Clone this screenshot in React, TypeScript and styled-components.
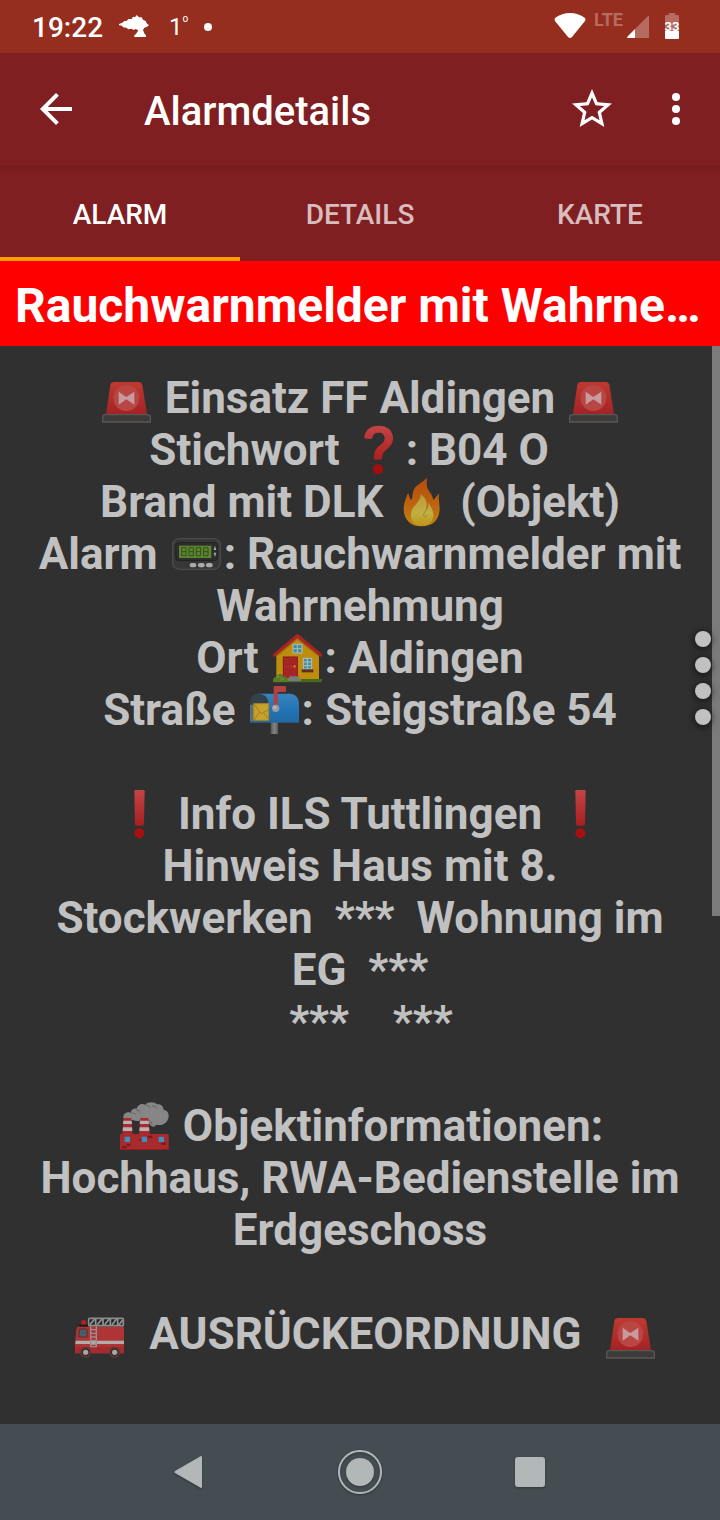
import styled, { createGlobalStyle } from "styled-components"

const Siren = () => (
    <Emoji viewBox="0 0 165 156" role="img" aria-label="Blaulicht">
        <defs>
            <linearGradient id="siren" x1="0" y1="0" x2="0" y2="1">
                <stop offset="0" stopColor="#BE3A30" />
                <stop offset="1" stopColor="#A32225" />
            </linearGradient>
        </defs>
        <path d="M21 127L34 38Q36 30 44 30H120Q128 30 130 38L144 127Z" fill="url(#siren)" />
        <circle cx="82" cy="78" r="39" fill="#B84643" />
        <path d="M59 59L82 75 106 59V98L82 82 59 98Z" fill="#C89A9E" />
        <path d="M11 150V136Q11 128 19 128H146Q154 128 154 136V150Z" fill="#3D3A3A" stroke="#575555" strokeWidth="4" />
    </Emoji>
)

const Question = () => (
    <Emoji viewBox="0 0 165 156" role="img" aria-label="Fragezeichen">
        <defs>
            <linearGradient id="question" x1="0" y1="0" x2="0" y2="1">
                <stop offset="0" stopColor="#C24444" />
                <stop offset="1" stopColor="#AE2020" />
            </linearGradient>
        </defs>
        <path d="M40 40C41 19 58 5 83 5C109 5 126 19 126 42C126 59 117 68 106 77C96 85 94 91 93 103Q93 107 88 107H73Q69 107 69 102C69 83 75 73 87 64C96 57 101 52 101 43C101 32 94 26 83 26C71 26 65 32 64 42Q63 45 59 45L44 44Q40 44 40 40Z" fill="url(#question)" />
        <circle cx="81" cy="136" r="15" fill="#A80D0E" />
    </Emoji>
)

const Exclamation = () => (
    <Emoji viewBox="0 0 165 156" role="img" aria-label="Ausrufezeichen">
        <defs>
            <linearGradient id="exclamation" x1="0" y1="0" x2="0" y2="1">
                <stop offset="0" stopColor="#C24545" />
                <stop offset="1" stopColor="#A91F20" />
            </linearGradient>
        </defs>
        <path d="M69 6H96Q98 6 98 9L96 109Q96 113 92 113H73Q69 113 69 109L67 9Q67 6 69 6Z" fill="url(#exclamation)" />
        <circle cx="82" cy="136" r="15" fill="#A70F10" />
    </Emoji>
)

const Fire = () => (
    <Emoji viewBox="0 0 165 156" role="img" aria-label="Feuer">
        <defs>
            <linearGradient id="fire" x1="0" y1="0" x2="0" y2="1">
                <stop offset="0" stopColor="#B84A0E" />
                <stop offset=".55" stopColor="#BC640F" />
                <stop offset="1" stopColor="#BF8414" />
            </linearGradient>
            <linearGradient id="flame" x1="0" y1="0" x2="0" y2="1">
                <stop offset="0" stopColor="#B99B35" />
                <stop offset=".6" stopColor="#C0B044" />
                <stop offset="1" stopColor="#BE9416" />
            </linearGradient>
        </defs>
        <path d="M98 5C100 20 94 32 107 48C114 57 116 63 118 72C123 68 128 60 136 52C132 68 137 82 137 97C137 132 116 151 83 151C49 151 29 130 29 98C29 80 37 65 42 51C46 60 47 67 51 72C57 66 54 57 58 45C64 25 84 23 98 5Z" fill="url(#fire)" />
        <path d="M81 55C100 71 99 84 98 101C105 97 102 87 104 80C108 90 118 101 118 117C118 137 104 149 84 149C63 149 51 137 51 119C51 99 58 96 66 85C73 76 80 67 81 55Z" fill="url(#flame)" />
        <path d="M97 90C101 100 91 107 89 116C88 123 96 124 100 117" fill="none" stroke="#AC8425" strokeWidth="3" />
    </Emoji>
)

const Pager = () => (
    <Emoji viewBox="0 0 165 156" role="img" aria-label="Pager">
        <rect x="11" y="32" width="143" height="92" rx="20" fill="#373737" stroke="#4B4B4B" strokeWidth="4" />
        <rect x="20" y="44" width="125" height="54" rx="9" fill="#2D2D2D" stroke="#222" strokeWidth="3" />
        <rect x="30" y="53" width="97" height="37" fill="#5C8530" />
        {[38, 60, 82, 104].map((x) => (
            <path key={x} d={`M${x} 59H${x + 13}V83H${x}ZM${x} 71H${x + 13}`} fill="none" stroke="#33501D" strokeWidth="3" />
        ))}
        <path d="M138 53L142 66H134ZM134 74H142L138 87Z" fill="#AAA" />
        <rect x="62" y="105" width="20" height="13" rx="6" fill="#AAA" />
        <rect x="87" y="105" width="20" height="13" rx="6" fill="#AAA" />
        <rect x="111" y="105" width="20" height="13" rx="6" fill="#AAA" />
    </Emoji>
)

const House = () => (
    <Emoji viewBox="0 0 165 156" role="img" aria-label="Haus">
        <path d="M19 66L82 13 147 66V142H19Z" fill="#BF8D0E" />
        <path d="M19 76L82 24 147 76V67L82 13 19 67Z" fill="#A27411" />
        <path d="M9 71Q8 67 12 64L78 8Q82 4 87 8L153 64Q157 67 156 71L152 75 82 18 13 75Z" fill="#AA2422" />
        <rect x="69" y="37" width="27" height="26" fill="#3B8FAE" stroke="#B9B9A6" strokeWidth="3" />
        <path d="M82 37V63M69 50H96" stroke="#B9B9A6" strokeWidth="3" />
        <rect x="40" y="75" width="42" height="61" fill="#AC2728" stroke="#7E1716" strokeWidth="3" />
        <path d="M47 83H58V97H47ZM64 83H75V97H64ZM47 112H58V126H47ZM64 112H75V126H64Z" fill="none" stroke="#94201F" strokeWidth="2" />
        <path d="M74 99L78 103 74 107 70 103Z" fill="#D3940A" />
        <rect x="100" y="79" width="25" height="32" fill="#3D91B0" stroke="#BDBDAB" strokeWidth="3" />
        <path d="M112 79V111M100 90H125M100 101H125" stroke="#BDBDAB" strokeWidth="3" />
        <rect x="95" y="112" width="35" height="9" fill="#5B2F25" />
        <path d="M9 141H156V151H9Z" fill="#42691D" />
        <path d="M57 133H87V140H93V148H51V140H57Z" fill="#7B7979" />
        <path d="M9 149C9 137 14 135 20 135C22 123 40 123 42 135C50 132 56 139 55 150H9Z" fill="#567C24" />
        <path d="M20 136Q29 130 32 138M31 145Q34 138 42 141" fill="none" stroke="#79983D" strokeWidth="3" />
    </Emoji>
)

const Mailbox = () => (
    <Emoji viewBox="0 0 165 156" role="img" aria-label="Briefkasten">
        <defs>
            <linearGradient id="mailbox" x1="0" y1="0" x2="0" y2="1">
                <stop offset="0" stopColor="#3B82BB" />
                <stop offset=".6" stopColor="#1F73B5" />
                <stop offset="1" stopColor="#2267A0" />
            </linearGradient>
            <linearGradient id="post" x1="0" y1="0" x2="1" y2="0">
                <stop offset="0" stopColor="#555" />
                <stop offset=".5" stopColor="#858585" />
                <stop offset="1" stopColor="#5C5C5C" />
            </linearGradient>
        </defs>
        <rect x="71" y="112" width="22" height="38" fill="url(#post)" />
        <path d="M32 29H127C145 29 156 41 156 59V116H9V55Z" fill="url(#mailbox)" />
        <path d="M9 58C9 39 20 30 36 30C53 30 64 41 64 59V111H9Z" fill="#31434D" />
        <path d="M9 62H20V111H9Z" fill="#58707C" />
        <path d="M20 59H65V109H20Z" fill="#C5A32F" stroke="#B58318" strokeWidth="3" />
        <path d="M21 60L40 87Q44 90 48 86L65 76M21 108L38 84M50 86L65 106" fill="none" stroke="#A9781A" strokeWidth="3" />
        <path d="M80 70V10Q80 6 84 6H113Q117 6 117 10V20Q117 24 113 24H92V70Z" fill="#B54041" />
        <circle cx="86" cy="73" r="11" fill="#9C9A9B" />
        <circle cx="83" cy="70" r="5" fill="#B6B6B6" />
    </Emoji>
)

const Factory = () => (
    <Emoji viewBox="0 0 165 156" role="img" aria-label="Fabrik">
        <path d="M20 58C15 42 29 34 41 38C43 28 51 24 58 26C63 12 75 9 85 14C94 4 112 5 120 13C132 11 139 19 140 29C154 31 158 45 153 58C148 73 132 78 118 74C112 83 101 82 97 70L94 62H68Q58 65 48 60Z" fill="#868686" />
        <path d="M41 39Q50 36 56 43M57 30Q68 29 70 38M86 15Q97 14 99 24M105 18Q116 15 121 27M98 61Q105 65 105 74" fill="none" stroke="#666" strokeWidth="3" />
        <path d="M20 54H43L47 104H16ZM70 54H94L99 104H66Z" fill="#A92B2D" />
        <path d="M19 62H44L45 72H18ZM18 82H45L46 93H17ZM69 62H95L96 72H68ZM68 82H96L97 93H67Z" fill="#BCB0B0" />
        <path d="M9 105Q9 102 12 102H152Q155 102 155 105V150H9Z" fill="#A92A2C" />
        <path d="M67 117H77V122H67ZM92 107H106V115H92ZM14 138H29V145H14ZM132 128H147V134H132ZM29 132H40V138H29Z" fill="#80171C" />
        <path d="M23 110H39V126H23ZM74 110H90V126H74ZM125 110H141V126H125Z" fill="#3B91BD" />
        <path d="M9 147H155V150H9Z" fill="#8E2024" />
    </Emoji>
)

const FireTruck = () => (
    <Emoji viewBox="0 0 165 156" role="img" aria-label="Feuerwehrauto">
        <path d="M28 50V43Q28 36 35 36Q42 36 42 43V50Z" fill="#B82023" />
        <rect x="22" y="50" width="27" height="6" fill="#181818" />
        <path d="M20 56H153Q156 56 156 59V136H9V108L13 65Q14 56 20 56Z" fill="#AE3435" />
        <path d="M11 98H156V108H10Z" fill="#B4AAAA" />
        <path d="M10 116H156V136H10Z" fill="#A42C2E" />
        <path d="M22 63H45V87H20Z" fill="#44606C" stroke="#6E2425" strokeWidth="3" />
        <rect x="50" y="31" width="104" height="22" rx="3" fill="#252525" stroke="#8C8C8C" strokeWidth="5" />
        <path d="M54 50L67 34M76 50L89 34M98 50L111 34M120 50L133 34M141 50L152 36M71 33V51M93 33V51M115 33V51M137 33V51" stroke="#969696" strokeWidth="5" />
        <path d="M56 54V116M73 54V116M55 65H74M55 76H74M55 87H74M55 98H74M55 109H74M55 116H74" stroke="#9D8E8E" strokeWidth="4" />
        {[41, 128].map((x) => (
            <g key={x}>
                <circle cx={x} cy="133" r="14" fill="#3E2523" stroke="#5B3A37" strokeWidth="5" />
                <circle cx={x} cy="133" r="8" fill="#A5A5A5" />
            </g>
        ))}
    </Emoji>
)

const tabs = ["ALARM", "DETAILS", "KARTE"]

const App = () => {
    return (
        <Container>
            <GlobalStyle />
            {/* Statusleiste */}
            <StatusBar>
                <StatusGroup>
                    <Clock>19:22</Clock>
                    <svg width="30" height="24" viewBox="0 0 90 72" fill="#FFFFFF">
                        <path d="M0 27L10 23 16 18 24 17 28 12 38 12 42 5 48 7 53 0 60 7 68 7 72 14 80 18 83 25 90 31 83 36 76 38 72 45 77 57 81 61V66H46V61L51 57 58 46 50 42 44 45 38 41 28 43 22 38 12 37 9 32 0 31Z" />
                    </svg>
                    <Temperature>1<sup>o</sup></Temperature>
                    <svg width="8" height="8" viewBox="0 0 8 8">
                        <circle cx="4" cy="4" r="4" fill="#FFFFFF" />
                    </svg>
                </StatusGroup>
                <StatusIcons>
                    <svg width="32" height="26" viewBox="0 0 32 26">
                        <path d="M16 25Q15 25 14 24L1 8Q0 6 1 5Q8 0 16 0T31 5Q32 6 31 8L18 24Q17 25 16 25Z" fill="#FFFFFF" />
                    </svg>
                    <Network>LTE</Network>
                    <svg width="22" height="26" viewBox="0 0 22 26">
                        <path d="M20 4Q22 2 22 4V25H8V16Z" fill="#B56B60" />
                        <path d="M8 16V25H1Q-1 25 1 23Z" fill="#FFFFFF" />
                    </svg>
                    <Battery width="14" height="26" viewBox="0 0 14 26">
                        <path d="M4 0H10V2H13Q14 2 14 4V18H0V4Q0 2 1 2H4Z" fill="#B56B60" />
                        <path d="M0 18H14V25Q14 26 13 26H1Q0 26 0 25Z" fill="#FFFFFF" />
                        <text x="7" y="18" textAnchor="middle">33</text>
                    </Battery>
                </StatusIcons>
            </StatusBar>

            <Toolbar>
                <IconButton aria-label="Zurück">
                    <svg viewBox="0 0 24 24">
                        <path d="M20 11H7.83l5.59-5.59L12 4l-8 8 8 8 1.41-1.41L7.83 13H20v-2z" />
                    </svg>
                </IconButton>
                <Title>Alarmdetails</Title>
                <Actions>
                    <IconButton aria-label="Favorit">
                        <svg viewBox="0 0 24 24">
                            <path d="M22 9.24l-7.19-.62L12 2 9.19 8.63 2 9.24l5.46 4.73L5.82 21 12 17.27 18.18 21l-1.63-7.03L22 9.24zM12 15.4l-3.76 2.27 1-4.28-3.32-2.88 4.38-.38L12 6.1l1.71 4.04 4.38.38-3.32 2.88 1 4.28L12 15.4z" />
                        </svg>
                    </IconButton>
                    <IconButton aria-label="Mehr">
                        <svg viewBox="0 0 24 24">
                            <circle cx="12" cy="6" r="2" />
                            <circle cx="12" cy="12" r="2" />
                            <circle cx="12" cy="18" r="2" />
                        </svg>
                    </IconButton>
                </Actions>
            </Toolbar>

            <Tabs role="tablist">
                {tabs.map((tab, index) => (
                    <Tab key={tab} role="tab" aria-selected={index === 0} $active={index === 0}>{tab}</Tab>
                ))}
            </Tabs>

            <Headline>Rauchwarnmelder mit Wahrnehmung</Headline>

            {/* Alarmtext */}
            <Content>
                <Line><Siren /> Einsatz FF Aldingen <Siren /></Line>
                <Line>Stichwort <Question />: B04 O{"\u00a0\u00a0"}</Line>
                <Line>Brand mit DLK <Fire /> (Objekt)</Line>
                <Line>Alarm <Pager />: Rauchwarnmelder mit Wahrnehmung</Line>
                <Line>Ort <House />: Aldingen</Line>
                <Line>Straße <Mailbox />: Steigstraße 54</Line>
                <Line />
                <Line><Exclamation /> Info ILS Tuttlingen <Exclamation /></Line>
                <Line>Hinweis Haus mit 8. Stockwerken  ***  Wohnung im EG  ***</Line>
                <Line>{"\u00a0\u00a0"}***    ***</Line>
                <Line />
                <Line><Factory /> Objektinformationen:</Line>
                <Line>Hochhaus, RWA-Bedienstelle im Erdgeschoss</Line>
                <Line />
                <Line>{"\u00a0"}<FireTruck />  AUSRÜCKEORDNUNG  <Siren /></Line>
                <ScrollThumb />
                <Handle>
                    <span />
                    <span />
                    <span />
                    <span />
                </Handle>
            </Content>

            {/* Navigationsleiste */}
            <NavBar>
                <NavButton aria-label="Zurück">
                    <svg width="32" height="32" viewBox="0 0 32 32">
                        <path d="M27 0Q28 0 28 1V31Q28 32 27 32L1 17Q0 16 1 15Z" fill="#B2B7B8" />
                    </svg>
                </NavButton>
                <NavButton aria-label="Startbildschirm">
                    <svg width="44" height="44" viewBox="0 0 44 44">
                        <circle cx="22" cy="22" r="21" fill="none" stroke="#B2B7B8" strokeWidth="2" />
                        <circle cx="22" cy="22" r="14" fill="#B2B7B8" />
                    </svg>
                </NavButton>
                <NavButton aria-label="Übersicht">
                    <svg width="30" height="30" viewBox="0 0 30 30">
                        <rect width="30" height="30" rx="3" fill="#B2B7B8" />
                    </svg>
                </NavButton>
            </NavBar>
        </Container>
    )
}

const GlobalStyle = createGlobalStyle`
    * {
        box-sizing: border-box;
    }
    body {
        margin: 0;
        background: #303030;
        font-family: Roboto, "Liberation Sans", sans-serif;
    }
    button {
        padding: 0;
        border: none;
        background: none;
        font-family: inherit;
        cursor: pointer;
    }
    svg {
        display: block;
        flex-shrink: 0;
    }
`

const Container = styled.div`
    min-height: 100vh;
    display: flex;
    flex-direction: column;
`

const StatusBar = styled.header`
    height: 53px;
    padding: 0 41px 0 32px;
    display: flex;
    justify-content: space-between;
    align-items: center;
    background: #952E1F;
    color: #FFFFFF;
`

const StatusGroup = styled.div`
    display: flex;
    align-items: center;
    gap: 16px;
`

const Clock = styled.span`
    padding-top: 2px;
    font-size: 28px;
    font-weight: 500;
    line-height: 32px;
`

const Temperature = styled.span`
    display: flex;
    padding-left: 4px;
    font-size: 24px;
    line-height: 28px;
    sup {
        font-size: 10px;
        line-height: 12px;
    }
`

const StatusIcons = styled.div`
    padding-bottom: 2px;
    display: flex;
    align-items: center;
    svg:first-child {
        margin-right: 8px;
    }
`

const Network = styled.span`
    padding-bottom: 12px;
    margin-right: 4px;
    font-size: 18px;
    font-weight: 700;
    line-height: 20px;
    color: #B56B60;
`

const Battery = styled.svg`
    margin-left: 16px;
    overflow: visible;
    text {
        font-size: 13px;
        font-weight: 700;
        fill: #FFFFFF;
    }
`

const Toolbar = styled.div`
    height: 112px;
    padding: 0 20px 0 32px;
    display: flex;
    align-items: center;
    gap: 64px;
    background: #801F21;
`

const IconButton = styled.button`
    width: 48px;
    height: 48px;
    flex-shrink: 0;
    svg {
        width: 48px;
        height: 48px;
        fill: #FFFFFF;
    }
`

const Title = styled.h1`
    flex: 1;
    margin: 0;
    padding-top: 6px;
    font-size: 40px;
    font-weight: 500;
    line-height: 48px;
    color: #FFFFFF;
`

const Actions = styled.div`
    display: flex;
    gap: 36px;
`

const Tabs = styled.div`
    height: 96px;
    display: flex;
    background: linear-gradient(#751C1E, #801F21 10px);
`

const Tab = styled.button<{ $active: boolean }>`
    flex: 1;
    padding-top: 6px;
    border-bottom: 4px solid ${({ $active }) => ($active ? "#FF9C00" : "transparent")};
    font-size: 28px;
    font-weight: 500;
    color: ${({ $active }) => ($active ? "#FFFFFF" : "#D9BCBD")};
`

const Headline = styled.h2`
    margin: 0;
    padding: 17px 15px 12px;
    overflow: hidden;
    text-overflow: ellipsis;
    white-space: nowrap;
    background: #FF0000;
    font-size: 48px;
    font-weight: 700;
    line-height: 56px;
    color: #FFFFFF;
`

const Content = styled.main`
    position: relative;
    flex: 1;
    padding: 26px 32px;
    background: #303030;
    color: #C1C1C1;
`

const Line = styled.p`
    min-height: 52px;
    margin: 0;
    font-size: 44px;
    font-weight: 700;
    line-height: 52px;
    text-align: center;
    white-space: pre-wrap;
`

const Emoji = styled.svg`
    display: inline-block;
    width: 55px;
    height: 52px;
    vertical-align: -11px;
`

const ScrollThumb = styled.div`
    position: absolute;
    top: 0;
    right: 0;
    width: 8px;
    height: 570px;
    background: #7C7B7A;
`

const Handle = styled.div`
    position: absolute;
    top: 285px;
    right: 9px;
    display: flex;
    flex-direction: column;
    gap: 10px;
    span {
        width: 16px;
        height: 16px;
        border-radius: 50%;
        background: #C1C1C1;
        box-shadow: 0 1px 7px 1px rgba(0, 0, 0, 0.6);
    }
`

const NavBar = styled.nav`
    height: 96px;
    display: flex;
    justify-content: center;
    align-items: center;
    gap: 74px;
    background: #444D52;
`

const NavButton = styled.button`
    width: 96px;
    height: 96px;
    display: flex;
    justify-content: center;
    align-items: center;
    svg {
        filter: drop-shadow(0 1px 1px rgba(0, 0, 0, 0.3));
    }
`

export default App
